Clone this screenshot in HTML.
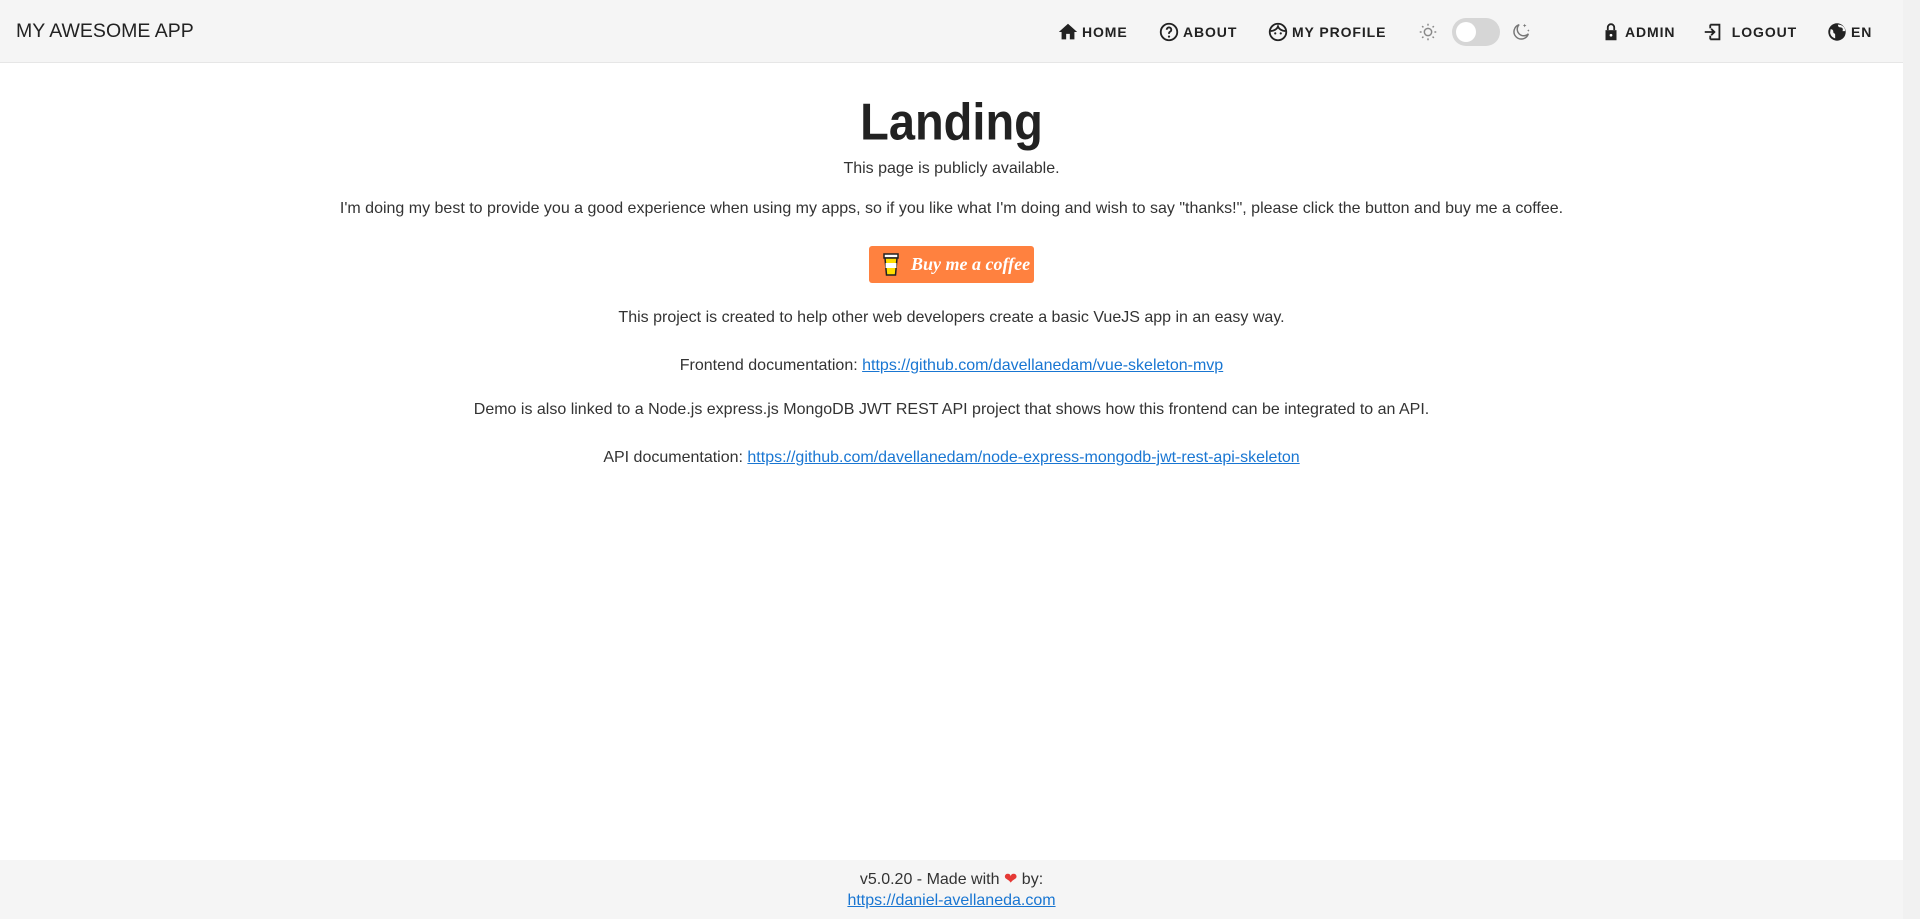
<!DOCTYPE html>
<html><head><meta charset="utf-8"><style>
*{box-sizing:border-box;margin:0;padding:0}
body{width:1920px;height:919px;overflow:hidden;font-family:"Liberation Sans",sans-serif;color:#333;background:#fff;position:relative}
.nav{position:absolute;left:0;top:0;width:1903px;height:63px;background:#f5f5f5;border-bottom:1px solid #e6e6e6}
.title{position:absolute;left:16px;top:20px;font-size:19.5px;color:#222}
.it{position:absolute;top:21px;font-size:14px;font-weight:bold;letter-spacing:.9px;color:#222;display:flex;align-items:center;gap:3px;height:22px}
.it svg{width:22px;height:22px}
.sb{position:absolute;right:0;top:0;width:17px;height:919px;background:#f1f1f1}
.c{position:absolute;left:0;width:1903px;text-align:center;font-size:16px;color:#333}
h1{position:absolute;left:0;width:1903px;text-align:center;top:94px;font-size:47px;font-weight:bold;color:#222;transform:scaleY(1.1)}
a{color:#1976d2;text-decoration:underline}
.btn{position:absolute;left:869px;top:246px;width:165px;height:37px;background:#ff813f;border-radius:3px;color:#fff;font-family:"Liberation Serif",serif;font-style:italic;font-weight:bold;font-size:18px;display:flex;align-items:center;padding-left:42px}
.foot{position:absolute;left:0;top:860px;width:1903px;height:59px;background:#f5f5f5}
</style></head><body>
<div class="nav">
<div class="title">MY AWESOME APP</div>
<div class="it" style="left:1057px"><svg viewBox="0 0 24 24"><path d="M10 20v-6h4v6h5v-8h3L12 3 2 12h3v8z" fill="#222"/></svg>HOME</div>
<div class="it" style="left:1158px"><svg viewBox="0 0 24 24"><circle cx="12" cy="12" r="9" fill="none" stroke="#222" stroke-width="2"/><path d="M9.5 9.5a2.5 2.5 0 1 1 3.5 2.3c-.7.4-1 .9-1 1.7v.5" fill="none" stroke="#222" stroke-width="2"/><circle cx="12" cy="17" r="1.2" fill="#222"/></svg>ABOUT</div>
<div class="it" style="left:1267px"><svg viewBox="0 0 24 24"><circle cx="12" cy="12" r="9" fill="none" stroke="#222" stroke-width="2"/><path d="M4 11c3 0 7-2 8-5 1 3 5 5 8 5" fill="none" stroke="#222" stroke-width="2"/><circle cx="9" cy="13.5" r="1.2" fill="#222"/><circle cx="15" cy="13.5" r="1.2" fill="#222"/></svg>MY PROFILE</div>
<div class="it" style="left:1417px"><svg viewBox="0 0 24 24"><circle cx="12" cy="12" r="4" fill="none" stroke="#888" stroke-width="1.6"/><path d="M12 3v2M12 19v2M3 12h2M19 12h2M5.6 5.6l1.4 1.4M17 17l1.4 1.4M5.6 18.4L7 17M17 7l1.4-1.4" stroke="#888" stroke-width="1.6"/></svg></div>
<div style="position:absolute;left:1452px;top:18px;width:48px;height:28px;border-radius:14px;background:#d6d6d6"><div style="position:absolute;left:4px;top:4px;width:20px;height:20px;border-radius:10px;background:#fff"></div></div>
<div class="it" style="left:1510px"><svg viewBox="0 0 24 24"><path d="M10 4a8 8 0 1 0 10 10A7 7 0 0 1 10 4z" fill="none" stroke="#777" stroke-width="1.6"/><path d="M16 3l.6 1.4L18 5l-1.4.6L16 7l-.6-1.4L14 5l1.4-.6zM20 9l.4 1 1 .4-1 .4-.4 1-.4-1-1-.4 1-.4z" fill="#777"/></svg></div>
<div class="it" style="left:1600px"><svg viewBox="0 0 24 24"><path d="M6 10h12v11H6z" fill="#222"/><path d="M8.5 10V7a3.5 3.5 0 0 1 7 0v3" fill="none" stroke="#222" stroke-width="2"/><circle cx="12" cy="15.5" r="1.5" fill="#fff"/></svg>ADMIN</div>
<div class="it" style="left:1702px"><svg viewBox="0 0 24 24"><path d="M9 4h10v16H9M9 8V4M9 20v-4" fill="none" stroke="#222" stroke-width="2"/><path d="M3 12h10M10 8.5L13.5 12 10 15.5" fill="none" stroke="#222" stroke-width="2"/></svg>&nbsp;LOGOUT</div>
<div class="it" style="left:1826px"><svg viewBox="0 0 24 24"><circle cx="12" cy="12" r="9.5" fill="#222"/><path d="M5 9c2 0 3 1 3 3s2 1 2 3v4c-3-1-5-3-5.5-6zM13 4c0 2 1 3 3 3s3 2 2 4h3c0-4-3-7-8-7z" fill="#f5f5f5"/></svg>EN</div>
</div>
<h1>Landing</h1>
<div class="c" style="top:160px">This page is publicly available.</div>
<div class="c" style="top:200px">I'm doing my best to provide you a good experience when using my apps, so if you like what I'm doing and wish to say "thanks!", please click the button and buy me a coffee.</div>
<div class="btn"><svg style="position:absolute;left:12px;top:6px" width="22" height="26" viewBox="0 0 22 26"><rect x="3" y="2" width="14" height="4" fill="#fff" stroke="#222" stroke-width="1.5"/><path d="M4 6h12l-1.5 17h-9z" fill="#ffdd00" stroke="#222" stroke-width="1.5"/><rect x="4.6" y="11" width="10.8" height="5" fill="#fff"/></svg>Buy me a coffee</div>
<div class="c" style="top:309px">This project is created to help other web developers create a basic VueJS app in an easy way.</div>
<div class="c" style="top:357px">Frontend documentation: <a>https://github.com/davellanedam/vue-skeleton-mvp</a></div>
<div class="c" style="top:401px">Demo is also linked to a Node.js express.js MongoDB JWT REST API project that shows how this frontend can be integrated to an API.</div>
<div class="c" style="top:449px">API documentation: <a>https://github.com/davellanedam/node-express-mongodb-jwt-rest-api-skeleton</a></div>
<div class="foot">
<div class="c" style="top:9px">v5.0.20 - Made with <span style="color:#e53935">&#10084;</span> by:</div>
<div class="c" style="top:32px"><a>https://daniel-avellaneda.com</a></div>
</div>
<div class="sb"></div>
</body></html>
